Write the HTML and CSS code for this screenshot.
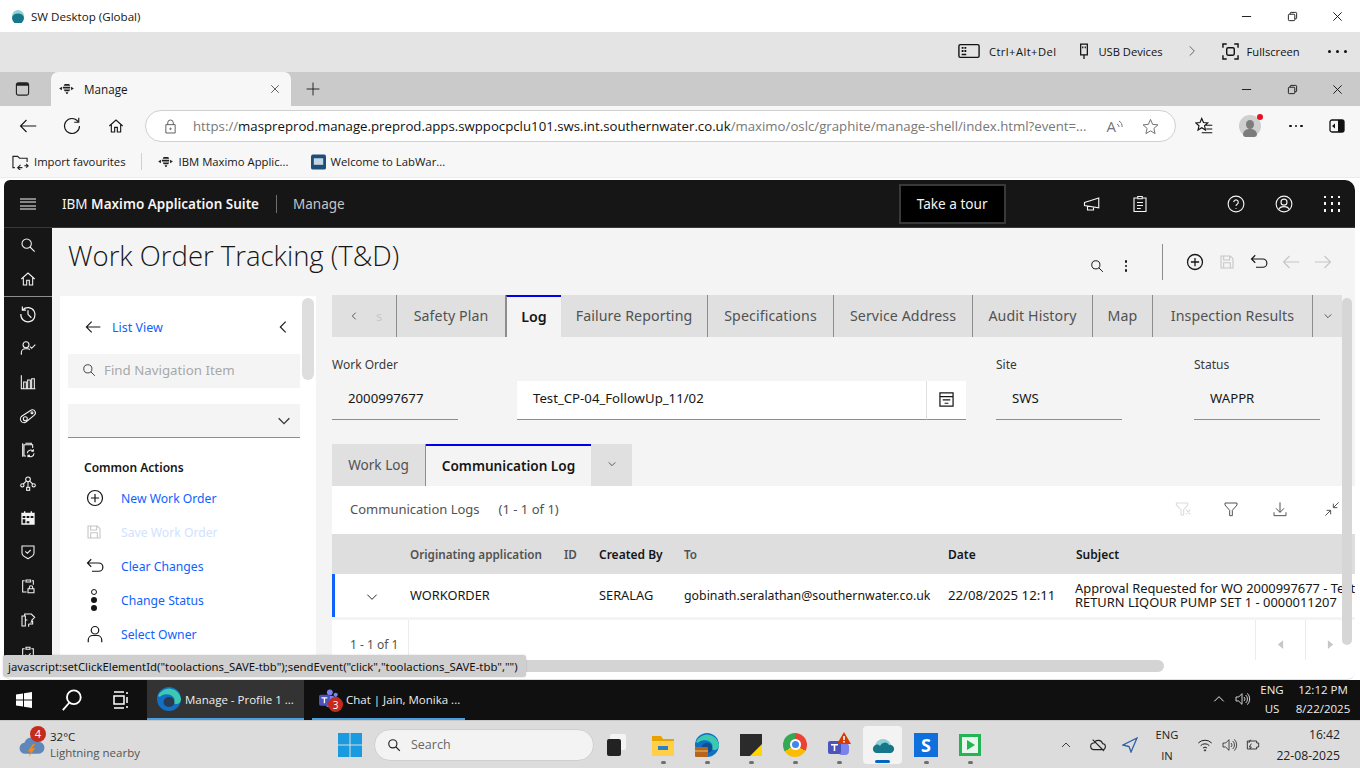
FILE: index.html
```html
<!DOCTYPE html>
<html lang="en">
<head>
<meta charset="utf-8">
<title>Manage</title>
<link rel="stylesheet" href="styles.css">
</head>
<body>
<svg class="defs" aria-hidden="true">
  <symbol id="search" viewBox="0 0 24 24"><circle cx="10" cy="10" r="7"/><path d="M15 15l7 7"/></symbol>
  <symbol id="home" viewBox="0 0 24 24"><path d="M2 12L12 3l10 9M5 10v11h5v-7h4v7h5V10"/></symbol>
  <symbol id="history" viewBox="0 0 24 24"><path d="M5 6.500A9.500 9.500 0 1 1 2.500 12M4.500 2v4.800h4.800M12 7v5.500l4.500 4.500"/></symbol>
  <symbol id="usercheck" viewBox="0 0 24 24"><circle cx="9" cy="7" r="4.500"/><path d="M2 22v-3a6 6 0 0 1 6-6h3a6 6 0 0 1 4 1.500M15 10l2.500 2.500L23 7"/></symbol>
  <symbol id="chart" viewBox="0 0 24 24"><path d="M2 2v20h21M5.500 22V12h4v10M11.500 22V9h4v13M17.500 22V7h4v15"/></symbol>
  <symbol id="belt" viewBox="0 0 24 24"><path d="M3 12l14-9a4.500 4.500 0 0 1 4 8L9 21a5 5 0 0 1-6-9z"/><circle cx="8" cy="16" r="3"/><circle cx="18" cy="7" r="1.500"/></symbol>
  <symbol id="clipcycle" viewBox="0 0 24 24"><path d="M8 2h9v2H6v17h3M4 2v20M17 4h2v5"/><path d="M11 17a5 5 0 0 1 9-3M21 17a5 5 0 0 1-9 3M20 11v3h-3M12 23v-3h3"/></symbol>
  <symbol id="tree" viewBox="0 0 24 24"><circle cx="12" cy="5" r="3.500"/><circle cx="3.500" cy="14" r="2.500"/><circle cx="20.500" cy="14" r="2.500"/><rect x="10" y="17" width="4.500" height="4.500"/><path d="M9 8l-4 4M15 8l4 4M12 9v8"/></symbol>
  <symbol id="calendar" viewBox="0 0 24 24"><path class="solid" d="M2 4h4V2h2v2h8V2h2v2h4v18H2zM4 9v3h4V9zm6 0v3h4V9zm6 0v3h4V9zM4 14v6h4v-6zm6 3v3h4v-3z"/></symbol>
  <symbol id="shield" viewBox="0 0 24 24"><path d="M3 3h18v11c0 4-5 6-9 8-4-2-9-4-9-8zM8 11l3 3 5-5"/></symbol>
  <symbol id="cliplock" viewBox="0 0 24 24"><path d="M9 3h7v3H9zM7 4H4v17h6M18 4h2v6M12 16h9v6h-9zM14 16v-2a2.500 2.500 0 0 1 5 0v2"/></symbol>
  <symbol id="cycle" viewBox="0 0 24 24"><path d="M3 6h5v15H3zM8 12h3M12 3h5l5 5-5 5M7 6V3h5M13 18h6v-5M19 13l-3 3M13 22v-4"/></symbol>
  <symbol id="clipcheck" viewBox="0 0 24 24"><path d="M9 2h6v3H9zM7 4H4v18h16V4h-3M8 13l3 3 5-5"/></symbol>
  <symbol id="plus" viewBox="0 0 24 24"><circle cx="12" cy="12" r="10"/><path d="M12 6.500v11M6.500 12h11"/></symbol>
  <symbol id="save" viewBox="0 0 24 24"><path d="M3 3h14l4 4v14H3zM7 3v6h9V3M7 21v-8h10v8"/></symbol>
  <symbol id="undo" viewBox="0 0 24 24"><path d="M2 8h15a5 5 0 0 1 0 11H8M7 3L2 8l5 5"/></symbol>
  <symbol id="arrowl" viewBox="0 0 24 24"><path d="M23 12H2M10 4l-8 8 8 8"/></symbol>
  <symbol id="arrowr" viewBox="0 0 24 24"><path d="M1 12h21M14 4l8 8-8 8"/></symbol>
  <symbol id="chevd" viewBox="0 0 24 24"><path d="M4 8l8 8 8-8"/></symbol>
  <symbol id="chevl" viewBox="0 0 24 24"><path d="M16 4l-8 8 8 8"/></symbol>
  <symbol id="chevr" viewBox="0 0 24 24"><path d="M8 4l8 8-8 8"/></symbol>
  <symbol id="chevu" viewBox="0 0 24 24"><path d="M4 16l8-8 8 8"/></symbol>
  <symbol id="close" viewBox="0 0 24 24"><path d="M3 3l18 18M21 3L3 21"/></symbol>
  <symbol id="minimise" viewBox="0 0 24 24"><path d="M2 12h20"/></symbol>
  <symbol id="restore" viewBox="0 0 24 24"><rect x="3" y="7" width="14" height="14" rx="2"/><path d="M7 7V5a2 2 0 0 1 2-2h10a2 2 0 0 1 2 2v10a2 2 0 0 1-2 2h-2"/></symbol>
  <symbol id="speaker" viewBox="0 0 24 24"><path d="M3 9h4l5-5v16l-5-5H3zM15 9a4 4 0 0 1 0 6M17.500 6a8 8 0 0 1 0 12M20 3.500a12 12 0 0 1 0 17"/></symbol>
  <symbol id="filter" viewBox="0 0 24 24"><path d="M3 3h18v3l-7 8v8h-4v-8L3 6z"/></symbol>
  <symbol id="download" viewBox="0 0 24 24"><path d="M12 2v15M6 11l6 6 6-6M3 17v5h18v-5"/></symbol>
  <symbol id="collapse" viewBox="0 0 24 24"><path d="M22 2l-8 8M14 4v6h6M2 22l8-8M4 14h6v6"/></symbol>
</svg>

<div class="page">
  <header class="titlebar">
    <div class="titlebar-left">
      <svg class="logo-sw" viewBox="0 0 14 14"><circle class="cloud-a" cx="7" cy="7" r="6"/><path class="cloud-b" d="M1 9a6 6 0 0 0 12 0 4 3 0 0 0-12 0z"/></svg>
      <span>SW Desktop (Global)</span>
    </div>
    <div class="winctl">
      <svg class="ic ic-11"><use href="#minimise"/></svg>
      <svg class="ic ic-11"><use href="#restore"/></svg>
      <svg class="ic ic-11"><use href="#close"/></svg>
    </div>
  </header>

  <div class="citrix">
    <div class="citrix-item ctrl">
      <svg class="cad" viewBox="0 0 24 16"><rect x="1" y="1" width="22" height="14" rx="1.500"/><path class="cad-keys" d="M4 3.500h2v2H4zM7 3.500h2v2H7zM4 7h2v2H4zM7 7h2v2H7zM4 11h5v1.500H4z"/></svg>
      <span class="ctrl-text">Ctrl+Alt+Del</span>
    </div>
    <div class="citrix-item usb">
      <svg class="usb-ic" viewBox="0 0 12 20"><path d="M2 1h8v13H2zM6 14v5M4.500 4v2M7.500 4v2"/></svg>
      <span>USB Devices</span>
    </div>
    <svg class="ic ic-14 citrix-chev"><use href="#chevr"/></svg>
    <div class="citrix-item full">
      <svg class="full-ic" viewBox="0 0 18 18"><path d="M1 5V1h4M13 1h4v4M17 13v4h-4M5 17H1v-4"/><rect x="5" y="5" width="8" height="8" rx="1.500"/></svg>
      <span>Fullscreen</span>
    </div>
    <div class="dots"><i></i><i></i><i></i></div>
  </div>

  <div class="tabstrip">
    <div class="tabside">
      <svg class="tabside-ic" viewBox="0 0 16 16"><rect x="1.500" y="1.500" width="13" height="13" rx="2"/><path class="fillbar" d="M1.500 3.500a2 2 0 0 1 2-2h9a2 2 0 0 1 2 2v1h-13z"/></svg>
    </div>
    <div class="browser-tab">
      <svg class="bee" viewBox="0 0 18 12"><path d="M7 1h5l1 2H6zM5 4h8v2H5zM6 7h7l-1 2H7zM8 10h3l-1 2H9zM1 6l3-2v4zM14 4l3 2-3 2z"/></svg>
      <span class="browser-tab-title">Manage</span>
      <svg class="ic ic-10"><use href="#close"/></svg>
    </div>
    <svg class="ic ic-14 newtab" viewBox="0 0 24 24"><path d="M12 1v22M1 12h22"/></svg>
    <div class="winctl winctl-edge">
      <svg class="ic ic-11"><use href="#minimise"/></svg>
      <svg class="ic ic-11"><use href="#restore"/></svg>
      <svg class="ic ic-11"><use href="#close"/></svg>
    </div>
  </div>

  <div class="addressbar">
    <svg class="ic ic-18 nav-back"><use href="#arrowl"/></svg>
    <svg class="ic ic-18 nav-reload" viewBox="0 0 24 24"><path d="M20 6a10 10 0 1 0 2 6M21 1v6h-6"/></svg>
    <svg class="ic ic-16 nav-home"><use href="#home"/></svg>
    <div class="omnibox">
      <svg class="lock" viewBox="0 0 14 16"><path d="M2 6h10v9H2zM4 6V4a3 3 0 0 1 6 0v2"/><circle cx="7" cy="10.500" r="0.800"/></svg>
      <span class="url"><span class="url-dim">https://</span>maspreprod.manage.preprod.apps.swppocpclu101.sws.int.southernwater.co.uk<span class="url-dim">/maximo/oslc/graphite/manage-shell/index.html?event=...</span></span>
      <span class="read-aloud">A<svg class="ra-waves" viewBox="0 0 8 12"><path d="M1 5a3 3 0 0 1 2 3M3 2a6 6 0 0 1 3 6"/></svg></span>
      <svg class="star" viewBox="0 0 24 24"><path d="M12 2l3 7 7.500.7-5.700 5 1.700 7.300-6.500-3.800L5.500 22l1.700-7.300-5.700-5L9 9z"/></svg>
    </div>
    <svg class="favlist" viewBox="0 0 24 24"><path d="M9 2l2.300 5.400 5.700.5-4.300 3.800 1.300 5.600-5-3-5 3 1.300-5.600L1 7.900l5.700-.5zM15 11h8M15 16h8M9 21h14"/></svg>
    <div class="avatar"><i class="avatar-head"></i><i class="avatar-body"></i><i class="avatar-dot"></i></div>
    <div class="dots dots-small"><i></i><i></i><i></i></div>
    <svg class="sidebar-ic" viewBox="0 0 16 16"><rect x="1" y="2" width="14" height="12" rx="2"/><path class="sidebar-fill" d="M9 2h4a2 2 0 0 1 2 2v8a2 2 0 0 1-2 2H9zM3 8l3-2.500v5z"/></svg>
  </div>

  <div class="favbar">
    <div class="fav">
      <svg class="fav-folder" viewBox="0 0 18 16"><path d="M3 14H1V2h5l2 2h8v4M11 14H6M9 11l-3 3 3 3M13 12h4l-2-2M17 12l-2 2"/></svg>
      <span>Import favourites</span>
    </div>
    <i class="fav-sep"></i>
    <div class="fav">
      <svg class="bee" viewBox="0 0 18 12"><path d="M7 1h5l1 2H6zM5 4h8v2H5zM6 7h7l-1 2H7zM8 10h3l-1 2H9zM1 6l3-2v4zM14 4l3 2-3 2z"/></svg>
      <span>IBM Maximo Applic...</span>
    </div>
    <div class="fav">
      <svg class="lab" viewBox="0 0 16 16"><rect width="16" height="16" rx="2"/><rect class="lab-in" x="3" y="4" width="10" height="7"/></svg>
      <span>Welcome to LabWar...</span>
    </div>
  </div>

  <div class="app">
    <div class="app-header">
      <svg class="hamburger" viewBox="0 0 16 12"><path d="M0 1h16M0 4h16M0 8h16M0 11h16"/></svg>
      <div class="brand">IBM <b>Maximo Application Suite</b></div>
      <i class="brand-sep"></i>
      <div class="brand-app">Manage</div>
      <div class="tour">Take a tour</div>
      <svg class="ic ic-18 hd-a" viewBox="0 0 24 24"><path d="M2 10l19-6v13L2 14zM6 15v5h8v-3"/></svg>
      <svg class="ic ic-18 hd-b" viewBox="0 0 24 24"><path d="M9 2h6v3H9zM8 4H4v18h16V4h-4M8 10h8M8 14h8M8 18h5"/></svg>
      <svg class="ic ic-18 hd-c" viewBox="0 0 24 24"><circle cx="12" cy="12" r="10.500"/><path d="M9 9.500a3 3 0 1 1 4.500 2.700c-1 .6-1.500 1.300-1.500 2.300M12 17.500v1"/></svg>
      <svg class="ic ic-18 hd-d" viewBox="0 0 24 24"><circle cx="12" cy="12" r="10.500"/><circle cx="12" cy="9.500" r="4"/><path d="M5 19.500c1-3 3.500-4 7-4s6 1 7 4"/></svg>
      <div class="waffle"><i></i><i></i><i></i><i></i><i></i><i></i><i></i><i></i><i></i></div>
    </div>

    <div class="app-body">
      <nav class="sidenav">
        <div class="sn-group">
          <div class="sn"><svg class="ic ic-16"><use href="#search"/></svg></div>
          <div class="sn"><svg class="ic ic-16"><use href="#home"/></svg></div>
        </div>
        <div class="sn"><svg class="ic ic-18"><use href="#history"/></svg></div>
        <div class="sn"><svg class="ic ic-16"><use href="#usercheck"/></svg></div>
        <div class="sn"><svg class="ic ic-16"><use href="#chart"/></svg></div>
        <div class="sn"><svg class="ic ic-16"><use href="#belt"/></svg></div>
        <div class="sn"><svg class="ic ic-16"><use href="#clipcycle"/></svg></div>
        <div class="sn"><svg class="ic ic-16"><use href="#tree"/></svg></div>
        <div class="sn"><svg class="ic ic-16"><use href="#calendar"/></svg></div>
        <div class="sn"><svg class="ic ic-16"><use href="#shield"/></svg></div>
        <div class="sn"><svg class="ic ic-16"><use href="#cliplock"/></svg></div>
        <div class="sn"><svg class="ic ic-16"><use href="#cycle"/></svg></div>
        <div class="sn"><svg class="ic ic-16"><use href="#clipcheck"/></svg></div>
      </nav>

      <main class="main">
        <div class="pagehead">
          <h1 class="pagetitle">Work Order Tracking (T&amp;D)</h1>
          <div class="pagetools">
            <svg class="ic ic-14 pt-search"><use href="#search"/></svg>
            <div class="kebab"><i></i><i></i><i></i></div>
            <i class="pt-sep"></i>
            <svg class="ic ic-18 pt-plus"><use href="#plus"/></svg>
            <svg class="ic ic-16 muted pt-save"><use href="#save"/></svg>
            <svg class="ic ic-18 pt-undo"><use href="#undo"/></svg>
            <svg class="ic ic-18 muted pt-left"><use href="#arrowl"/></svg>
            <svg class="ic ic-18 muted pt-right"><use href="#arrowr"/></svg>
          </div>
        </div>

        <div class="workspace">
          <aside class="leftpanel">
            <div class="listview">
              <svg class="ic ic-16"><use href="#arrowl"/></svg>
              <a class="link lv-link">List View</a>
              <svg class="ic ic-16 lv-chev"><use href="#chevl"/></svg>
            </div>
            <div class="findnav">
              <svg class="ic ic-14 fn-ic"><use href="#search"/></svg>
              <span>Find Navigation Item</span>
            </div>
            <div class="dropdown"><svg class="ic ic-16"><use href="#chevd"/></svg></div>
            <h2 class="actions-title">Common Actions</h2>
            <ul class="actions">
              <li><span class="act-ic"><svg class="ic ic-18"><use href="#plus"/></svg></span><a class="link">New Work Order</a></li>
              <li class="disabled"><span class="act-ic"><svg class="ic ic-16"><use href="#save"/></svg></span><a class="link">Save Work Order</a></li>
              <li><span class="act-ic"><svg class="ic ic-18"><use href="#undo"/></svg></span><a class="link">Clear Changes</a></li>
              <li><span class="act-ic"><span class="status-ic"><i class="s-open"></i><i></i><i></i></span></span><a class="link">Change Status</a></li>
              <li><span class="act-ic"><svg class="ic ic-18" viewBox="0 0 24 24"><circle cx="12" cy="7" r="5"/><path d="M3 23v-3a6 6 0 0 1 6-6h6a6 6 0 0 1 6 6v3"/></svg></span><a class="link">Select Owner</a></li>
            </ul>
            <i class="panel-scroll"></i>
          </aside>

          <section class="detail">
            <div class="tabs">
              <div class="tab tab-nav"><svg class="ic ic-10"><use href="#chevl"/></svg><span class="tab-ghost">s</span></div>
              <div class="tab">Safety Plan</div>
              <div class="tab active">Log</div>
              <div class="tab">Failure Reporting</div>
              <div class="tab">Specifications</div>
              <div class="tab">Service Address</div>
              <div class="tab">Audit History</div>
              <div class="tab">Map</div>
              <div class="tab">Inspection Results</div>
              <div class="tab tab-more"><svg class="ic ic-10"><use href="#chevd"/></svg></div>
            </div>

            <div class="form">
              <div class="field">
                <label class="flabel">Work Order</label>
                <div class="fvalue">2000997677</div>
              </div>
              <i></i>
              <div class="field field-desc">
                <div class="fvalue fvalue-white">Test_CP-04_FollowUp_11/02</div>
                <div class="fbtn"><svg class="longdesc" viewBox="0 0 16 16"><path d="M1 1h14v14H1zM1 5h14M4 8.500h8M6 12h4"/></svg></div>
              </div>
              <i></i>
              <div class="field">
                <label class="flabel">Site</label>
                <div class="fvalue">SWS</div>
              </div>
              <i></i>
              <div class="field">
                <label class="flabel">Status</label>
                <div class="fvalue">WAPPR</div>
              </div>
            </div>

            <div class="subtabs">
              <div class="subtab subtab-work">Work Log</div>
              <div class="subtab active">Communication Log</div>
              <div class="subtab subtab-more"><svg class="ic ic-10"><use href="#chevd"/></svg></div>
            </div>

            <div class="tablepanel">
              <div class="tabletools">
                <span class="tt-title">Communication Logs</span>
                <span class="tt-count">(1 - 1 of 1)</span>
                <svg class="ic ic-16 muted-soft tt-clear" viewBox="0 0 24 24"><path d="M2 3h17v3l-6 7v8h-4v-8L2 6zM17 13l6 7M23 13l-6 7"/></svg>
                <svg class="ic ic-16 tt-filter"><use href="#filter"/></svg>
                <svg class="ic ic-16 tt-dl"><use href="#download"/></svg>
                <svg class="ic ic-16 tt-col"><use href="#collapse"/></svg>
              </div>
              <div class="row thead">
                <span></span>
                <span class="th-soft">Originating application</span>
                <span class="th-soft">ID</span>
                <span>Created By</span>
                <span class="th-soft">To</span>
                <span>Date</span>
                <span>Subject</span>
              </div>
              <div class="row tbody">
                <span class="row-exp"><svg class="ic ic-14"><use href="#chevd"/></svg></span>
                <span>WORKORDER</span>
                <span></span>
                <span>SERALAG</span>
                <span class="cell-mail">gobinath.seralathan@southernwater.co.uk</span>
                <span class="cell-date">22/08/2025 12:11</span>
                <span class="subject">Approval Requested for WO 2000997677 - Test_<br>RETURN LIQOUR PUMP SET 1 - 0000011207</span>
              </div>
              <div class="tablefoot">
                <span class="tf-count">1 - 1 of 1</span>
                <i class="tf-spacer"></i>
                <span class="tf-btn"><svg class="caret" viewBox="0 0 8 10"><path d="M7 0v10L1 5z"/></svg></span>
                <span class="tf-btn"><svg class="caret" viewBox="0 0 8 10"><path d="M1 0v10l6-5z"/></svg></span>
              </div>
            </div>
            <i class="detail-scroll"></i>
          </section>
        </div>
      </main>
    </div>

    <div class="hscroll"><i></i></div>
    <div class="statuslink">javascript:setClickElementId("toolactions_SAVE-tbb");sendEvent("click","toolactions_SAVE-tbb","")</div>
  </div>

  <div class="remote-taskbar">
    <svg class="win10" viewBox="0 0 16 16"><path d="M0 2.500l7-1V7.500H0zM8 1.300L16 0v7.500H8zM0 8.500h7v6l-7-1zM8 8.500h8V16l-8-1.300z"/></svg>
    <svg class="rt-search" viewBox="0 0 24 24"><circle cx="14" cy="9" r="7.500"/><path d="M9 15l-7 8"/></svg>
    <svg class="rt-view" viewBox="0 0 18 18"><path d="M3 1h10M3 17h10M3 5h10v8H3zM16 1v2M16 6v6M16 15v2"/></svg>
    <div class="rt-app rt-app-active">
      <svg class="edge-ic" viewBox="0 0 24 24"><circle class="e-blue" cx="12" cy="12" r="12"/><path class="e-green" d="M1 9a12 12 0 0 1 23 3c0 3-2 5-5 5-2 0-3-1-3-2 1-1 2-2 1-4-2-4-9-5-13-2-1 1-2 1-3 0z"/><ellipse class="e-hole-dark" cx="12" cy="15" rx="5.500" ry="5"/></svg>
      <span>Manage - Profile 1 ...</span>
    </div>
    <div class="rt-app rt-app-chat">
      <span class="teams-mini"><svg class="teams-people" viewBox="0 0 24 24"><circle class="t1" cx="13" cy="4" r="3.500"/><circle class="t1" cx="20" cy="7" r="2.500"/><rect class="t1" x="15" y="10" width="9" height="11" rx="4"/><rect class="t1" x="8" y="8" width="11" height="14" rx="4"/><rect class="t2" x="0" y="7" width="13" height="13" rx="2"/><path class="t3" d="M3 10h7v1.500H7.300V17H5.700v-5.500H3z"/></svg><b class="teams-badge">3</b></span>
      <span>Chat | Jain, Monika ...</span>
    </div>
    <div class="rt-tray">
      <svg class="ic ic-14 rt-up"><use href="#chevu"/></svg>
      <svg class="ic ic-16 rt-sp"><use href="#speaker"/></svg>
      <div class="rt-lang">ENG<br>US</div>
      <div class="rt-clock">12:12 PM<br>8/22/2025</div>
    </div>
  </div>

  <footer class="local-taskbar">
    <div class="weather">
      <div class="weather-ic">
        <svg viewBox="0 0 24 24"><path class="w-cloud" d="M6 20a5 5 0 0 1-1-10 7 7 0 0 1 13-1 5.500 5.500 0 0 1 0 11z"/><path class="w-bolt" d="M13 11l-5 7h3l-2 5 6-8h-3l3-4z"/></svg>
        <b class="weather-badge">4</b>
      </div>
      <div class="weather-text"><span>32°C</span><span class="weather-sub">Lightning nearby</span></div>
    </div>
    <div class="lt-center">
      <svg class="win11" viewBox="0 0 24 24"><path d="M0 0h11.500v11.500H0zM12.500 0H24v11.500H12.500zM0 12.500h11.500V24H0zM12.500 12.500H24V24H12.500z"/></svg>
      <div class="lt-search">
        <svg class="ic ic-14"><use href="#search"/></svg>
        <span>Search</span>
      </div>
      <div class="lt-app lt-copilot"><i class="cp-white"></i><i class="cp-black"></i></div>
      <div class="lt-app lt-folder"><svg class="lt-ic" viewBox="0 0 24 24"><path class="y1" d="M1 3h9l2 3h11v17H1z"/><path class="y2" d="M1 8h22v15H1z"/><rect class="y3" x="7" y="13" width="10" height="4"/></svg><i class="pip"></i></div>
      <div class="lt-app"><svg class="lt-ic" viewBox="0 0 24 24"><circle class="e-blue" cx="12" cy="12" r="12"/><path class="e-green" d="M1 9a12 12 0 0 1 23 3c0 3-2 5-5 5-2 0-3-1-3-2 1-1 2-2 1-4-2-4-9-5-13-2-1 1-2 1-3 0z"/><ellipse class="e-hole" cx="12" cy="15" rx="5.500" ry="5"/><rect class="e-case" x="0" y="14" width="13" height="10" rx="1"/><path class="e-case-line" d="M0 18h13"/></svg><i class="pip"></i></div>
      <div class="lt-app"><svg class="lt-ic" viewBox="0 0 24 24"><rect class="note" x="1" y="1" width="22" height="22"/><path class="note-y" d="M23 11v12H11z"/></svg><i class="pip"></i></div>
      <div class="lt-app"><span class="chrome"><i></i></span><i class="pip"></i></div>
      <div class="lt-app"><svg class="lt-ic" viewBox="0 0 24 24"><circle class="t1" cx="16" cy="9" r="3.500"/><rect class="t1" x="11" y="10" width="11" height="12" rx="4"/><rect class="t2" x="1" y="8" width="13" height="13" rx="2"/><path class="t3" d="M4 11h7v1.500H8.300V18H6.700v-5.500H4z"/><path class="t4" d="M17-1l7 12H10z"/><path class="t5" d="M16.200 3h1.600v4h-1.600zM16.200 8h1.600v1.500h-1.600z"/></svg><i class="pip"></i></div>
      <div class="lt-app lt-active"><svg class="lt-ic" viewBox="0 0 24 24"><path class="cloud-a" d="M4 14a8 8 0 0 1 16 0z"/><path class="cloud-b" d="M2 15a4 4 0 0 1 7-2 5 5 0 0 1 9-1 4 4 0 0 1 2 8H6a4 4 0 0 1-4-5z"/></svg><i class="bar"></i></div>
      <div class="lt-app"><span class="sapp">S</span><i class="pip"></i></div>
      <div class="lt-app"><svg class="lt-ic" viewBox="0 0 24 24"><rect class="g1" x="1" y="1" width="22" height="22"/><rect class="g2" x="4" y="4" width="16" height="16"/><path class="g3" d="M9 7l8 5-8 5z"/></svg><i class="pip"></i></div>
    </div>
    <div class="lt-tray">
      <svg class="ic ic-12 tr-up"><use href="#chevu"/></svg>
      <svg class="ic ic-16 tr-cloud" viewBox="0 0 24 24"><path d="M6 19a5 5 0 0 1 0-10 7 7 0 0 1 13 1 4.500 4.500 0 0 1-1 9zM4 4l17 17"/></svg>
      <svg class="tr-nav" viewBox="0 0 16 16"><path d="M15 1L1 8l6 1.500L9 15z"/></svg>
      <div class="tr-lang">ENG<br>IN</div>
      <svg class="ic ic-16 tr-wifi" viewBox="0 0 24 24"><path d="M2 9a14 14 0 0 1 20 0M5.500 13a9 9 0 0 1 13 0M9 16.500a4.500 4.500 0 0 1 6 0"/><circle cx="12" cy="20" r="1"/></svg>
      <svg class="ic ic-16 tr-sp"><use href="#speaker"/></svg>
      <svg class="ic ic-16 tr-bat" viewBox="0 0 24 24"><path d="M5 6h14v3h3v6h-3v3H5zM7 9l3-5M11 10l-3 5h3l-2 3"/></svg>
      <div class="tr-clock">16:42<br>22-08-2025</div>
    </div>
  </footer>
</div>
</body>
</html>
```
FILE: styles.css
```css
* { box-sizing: border-box; }
html, body { margin: 0; padding: 0; }
body { width: 1360px; height: 768px; overflow: hidden; background: #fff; font-family: "Open Sans", "Noto Sans", sans-serif; color: #161616; }
.defs { display: none; }
i { display: block; font-style: normal; }
h1, h2, ul { margin: 0; padding: 0; font-weight: normal; }
ul { list-style: none; }

.page { display: flex; flex-direction: column; width: 1360px; height: 768px; overflow: hidden; }

.ic { fill: none; stroke: currentColor; stroke-width: 1.6; display: block; flex: none; overflow: visible; }
symbol { overflow: visible; }
.solid { fill: currentColor; stroke: none; }
.ic-10 { width: 10px; height: 10px; }
.ic-11 { width: 11px; height: 11px; }
.ic-12 { width: 12px; height: 12px; }
.ic-14 { width: 14px; height: 14px; }
.ic-16 { width: 16px; height: 16px; }
.ic-18 { width: 18px; height: 18px; }
.muted { color: #c6c6c6; }
.muted-soft { color: #dcdcdc; }

/* Citrix window title */
.titlebar { height: 32px; flex: none; display: flex; align-items: center; padding-left: 11px; font-size: 11.6px; }
.titlebar-left { display: flex; align-items: center; gap: 6px; }
.logo-sw { width: 14px; height: 14px; }
.cloud-a { fill: #8fd0d6; }
.cloud-b { fill: #17778a; }
.winctl { margin-left: auto; display: flex; width: 119px; justify-content: space-between; padding-right: 17px; color: #111; }
.winctl .ic { stroke-width: 2; }

/* Citrix toolbar */
.citrix { height: 40px; flex: none; background: #e4e4e4; display: flex; align-items: center; font-size: 11.2px; color: #111; padding-left: 958px; padding-bottom: 2px; }
.citrix-item { display: flex; align-items: center; }
.ctrl-text { letter-spacing: 0.42px; }
.cad { width: 22px; height: 16px; fill: none; stroke: #111; stroke-width: 1.500; margin-right: 9px; }
.cad-keys { fill: #111; stroke: none; }
.usb { margin-left: 23px; }
.usb-ic { width: 10px; height: 19px; fill: none; stroke: #111; stroke-width: 1.500; margin-right: 9px; }
.citrix-chev { margin-left: 22px; color: #555; stroke-width: 1.500; }
.full { margin-left: 23px; }
.full-ic { width: 17px; height: 17px; fill: none; stroke: #111; stroke-width: 1.500; margin-right: 8px; }
.dots { display: flex; gap: 5px; margin-left: 28px; }
.dots i { width: 3px; height: 3px; border-radius: 50%; background: #111; }
.dots-small { gap: 3px; margin-left: 0; }
.dots-small i { width: 2.500px; height: 2.500px; }

/* Edge tabs */
.tabstrip { height: 34px; flex: none; background: #cacaca; display: flex; align-items: center; position: relative; }
.tabside { width: 51px; display: flex; justify-content: center; padding-right: 6px; }
.tabside-ic { width: 15px; height: 16px; fill: none; stroke: #222; stroke-width: 1.200; }
.fillbar { fill: #222; stroke: none; }
.browser-tab { width: 240px; height: 34px; background: #f7f7f7; border-radius: 7px 7px 0 0; display: flex; align-items: center; padding-left: 7px; padding-right: 11px; font-size: 11.7px; padding-bottom: 1px; }
.browser-tab-title { margin-left: 9px; flex: 1; }
.bee { width: 17px; height: 11px; fill: #1f1f1f; flex: none; }
.newtab { margin-left: 15px; stroke-width: 1.500; }
.winctl-edge { margin-left: auto; }

/* Address bar */
.addressbar { height: 40px; flex: none; background: #f7f7f7; display: flex; align-items: center; padding-left: 19px; }
.nav-back { stroke-width: 1.500; }
.nav-reload { margin-left: 26px; stroke-width: 1.500; }
.nav-home { margin-left: 27px; stroke-width: 1.700; }
.omnibox { margin-left: 21px; width: 1031px; height: 32px; border: 1px solid #d0d0d0; border-radius: 16px; background: #fff; display: flex; align-items: center; padding-left: 18px; flex: none; }
.lock { width: 13px; height: 15px; fill: none; stroke: #555; stroke-width: 1; flex: none; }
.url { margin-left: 16px; font-size: 13.22px; white-space: nowrap; color: #111; flex: none; }
.url-dim { color: #777; }
.read-aloud { margin-left: 20px; font-size: 15px; color: #777; display: flex; line-height: 1; }
.ra-waves { width: 8px; height: 12px; fill: none; stroke: #777; stroke-width: 1; }
.star { margin-left: 18px; width: 17px; height: 17px; fill: none; stroke: #666; stroke-width: 1.300; }
.favlist { margin-left: 19px; width: 18px; height: 18px; fill: none; stroke: #111; stroke-width: 1.500; }
.avatar { margin-left: 26px; width: 22px; height: 22px; border-radius: 50%; background: #cfcfcf; position: relative; overflow: visible; }
.avatar-head { position: absolute; left: 7px; top: 5px; width: 8px; height: 9px; border-radius: 50%; background: #7c7c7c; }
.avatar-body { position: absolute; left: 4px; top: 14px; width: 14px; height: 8px; border-radius: 7px 7px 3px 3px; background: #7c7c7c; }
.avatar-dot { position: absolute; right: -2px; top: -1px; width: 6px; height: 6px; border-radius: 50%; background: #e81123; }
.addressbar .dots-small { margin-left: 28px; }
.sidebar-ic { margin-left: 26px; width: 16px; height: 16px; fill: none; stroke: #111; stroke-width: 1.300; }
.sidebar-fill { fill: #111; stroke: none; }

/* Favourites */
.favbar { height: 32px; flex: none; background: #f7f7f7; display: flex; align-items: center; padding-left: 12px; font-size: 11.3px; border-bottom: 1px solid #ececec; }
.fav { display: flex; align-items: center; gap: 5px; }
.fav-folder { width: 17px; height: 16px; fill: none; stroke: #222; stroke-width: 1.200; }
.fav-sep { width: 1px; height: 17px; background: #d0d0d0; margin: 0 15px; }
.favbar .fav:nth-of-type(3) { margin-left: 22px; }
.lab { width: 15px; height: 16px; fill: #1f4e79; }
.lab-in { fill: #c5d5e5; }

/* App */
.app { height: 500px; flex: none; margin-top: 2px; width: 1351px; margin-left: 4px; position: relative; display: flex; flex-direction: column; font-family: "Noto Sans", sans-serif; border-radius: 5px 8px 8px 8px; overflow: visible; }
.app-header { height: 48px; flex: none; background: #161616; color: #f4f4f4; border-radius: 6px 10px 0 0; border-bottom: 1px solid #393939; display: flex; align-items: center; padding-left: 16px; font-size: 13.5px; }
.hamburger { width: 16px; height: 12px; stroke: #f4f4f4; stroke-width: 1.200; flex: none; }
.brand { margin-left: 26px; white-space: nowrap; }
.brand b { font-weight: 600; }
.brand-sep { width: 1px; height: 18px; background: #6f6f6f; margin-left: 17px; }
.brand-app { margin-left: 16px; color: #c6c6c6; }
.tour { margin-left: 554px; width: 107px; height: 40px; background: #000; border: 2px solid #393939; display: flex; align-items: center; justify-content: center; font-size: 13.6px; flex: none; }
.hd-a { margin-left: 77px; stroke-width: 1.500; }
.hd-b { margin-left: 30px; stroke-width: 1.500; }
.hd-c { margin-left: 78px; stroke-width: 1.500; }
.hd-d { margin-left: 30px; stroke-width: 1.500; }
.waffle { margin-left: 31px; width: 16px; height: 16px; display: grid; grid-template-columns: repeat(3, 2px); justify-content: space-between; align-content: space-between; flex: none; }
.waffle i { width: 2.500px; height: 2.500px; background: #f4f4f4; }

.app-body { height: 432px; flex: none; display: flex; background: #f4f4f4; overflow: hidden; }
.sidenav { width: 48px; flex: none; background: #161616; color: #f4f4f4; }
.sn-group { border-bottom: 1px solid #8d8d8d; height: 69px; }
.sn { height: 34px; display: flex; align-items: center; justify-content: center; }

.main { flex: 1; min-width: 0; display: flex; flex-direction: column; }
.pagehead { height: 68px; flex: none; display: flex; padding-left: 16px; }
.pagetitle { font-family: "Open Sans", sans-serif; font-weight: 300; font-size: 27.5px; line-height: 1; margin-top: 14px; white-space: nowrap; }
.pagetools { margin-left: auto; display: flex; align-items: center; height: 36px; margin-top: 16px; padding-right: 23px; }
.pt-search { margin-top: 8px; stroke-width: 1.700; }
.kebab { margin-left: 21px; margin-top: 8px; display: flex; flex-direction: column; gap: 2px; }
.kebab i { width: 2.500px; height: 2.500px; border-radius: 50%; background: #161616; }
.pt-sep { width: 1px; height: 36px; background: #8d8d8d; margin-left: 35px; }
.pt-plus { margin-left: 23px; stroke-width: 1.700; }
.pt-save { margin-left: 15px; }
.pt-undo { margin-left: 15px; stroke-width: 1.500; }
.pt-left { margin-left: 14px; stroke-width: 1.500; }
.pt-right { margin-left: 14px; stroke-width: 1.500; }

.workspace { flex: 1; display: flex; padding-left: 8px; min-height: 0; }
.leftpanel { width: 256px; flex: none; background: #fff; padding-left: 8px; position: relative; overflow: hidden; }
.listview { height: 58px; display: flex; align-items: center; padding-left: 17px; padding-top: 4px; }
.link { color: #0f62fe; font-size: 12.2px; white-space: nowrap; }
.lv-link { margin-left: 11px; font-size: 12.5px; }
.lv-chev { margin-left: 112px; stroke-width: 1.700; }
.findnav { width: 232px; height: 34px; background: #f4f4f4; display: flex; align-items: center; padding: 0 0 2px 14px; font-size: 13.3px; color: #a8a8a8; gap: 8px; }
.fn-ic { color: #393939; stroke-width: 1.600; }
.dropdown { width: 232px; height: 34px; margin-top: 16px; background: #f4f4f4; border-bottom: 1px solid #8d8d8d; display: flex; align-items: center; justify-content: flex-end; padding-right: 8px; color: #393939; }
.dropdown .ic { stroke-width: 2; }
.actions-title { font-size: 12px; font-weight: 600; margin: 21px 0 0 16px; line-height: 18px; }
.actions { margin-top: 4px; }
.actions li { height: 34px; display: flex; align-items: center; padding-left: 16px; }
.act-ic { width: 37px; display: flex; justify-content: flex-start; padding-left: 2px; }
.disabled .act-ic { color: #c6c6c6; }
.disabled .link { color: #d0e2ff; }
.status-ic { display: flex; flex-direction: column; gap: 2px; margin-left: 5px; }
.status-ic i { width: 6px; height: 6px; border-radius: 50%; background: #161616; }
.status-ic .s-open { background: #fff; border: 1px solid #161616; }
.panel-scroll { position: absolute; right: 2px; top: 2px; width: 12px; height: 82px; border-radius: 6px; background: #dedede; }

.detail { flex: 1; min-width: 0; margin-left: 16px; margin-top: -1px; position: relative; overflow: hidden; }
.tabs { height: 42px; margin-right: 13px; background: #e0e0e0; display: grid; grid-template-columns: 65px 109px 55px 147px 126px 139px 120px 60px 160px 1fr; font-size: 14.2px; color: #525252; }
.tab { display: flex; align-items: center; justify-content: center; border-right: 1px solid #8d8d8d; white-space: nowrap; letter-spacing: 0.1px; padding-bottom: 1px; }
.tab.active { background: #f4f4f4; border-top: 2px solid #0000e6; border-right: 0; border-left: 1px solid #8d8d8d; color: #161616; font-weight: 600; }
.tab-nav { justify-content: flex-start; padding-left: 17px; color: #161616; gap: 17px; }
.tab-ghost { color: #c8c8c8; font-size: 13px; }
.tab-more { border-right: 0; color: #161616; }

.form { height: 107px; display: grid; grid-template-columns: 126px 59px 449px 30px 126px 72px 126px; align-items: end; padding-bottom: 24px; }
.flabel { display: block; font-size: 12px; color: #393939; line-height: 16px; margin-bottom: 8px; }
.fvalue { height: 39px; border-bottom: 1px solid #8d8d8d; display: flex; align-items: center; padding-left: 16px; font-size: 13.2px; color: #161616; padding-bottom: 4px; }
.field-desc { display: flex; }
.fvalue-white { flex: 1; background: #fff; }
.fbtn { width: 40px; height: 39px; background: #fff; border-bottom: 1px solid #8d8d8d; border-left: 1px solid #e0e0e0; display: flex; align-items: center; justify-content: center; flex: none; padding-bottom: 2px; }
.longdesc { width: 15px; height: 15px; fill: none; stroke: #161616; stroke-width: 1.300; }

.subtabs { height: 42px; display: flex; font-size: 13.6px; }
.subtab { display: flex; align-items: center; justify-content: center; background: #e0e0e0; color: #525252; padding-bottom: 2px; }
.subtab-work { width: 94px; border-right: 1px solid #8d8d8d; }
.subtab.active { width: 165px; background: #f4f4f4; border-top: 2px solid #0000e6; color: #161616; font-weight: 600; }
.subtab-more { width: 41px; color: #161616; }

.tablepanel { background: #fff; height: 174px; }
.tabletools { height: 48px; display: flex; align-items: center; padding: 0 0 2px 18px; font-size: 13px; color: #525252; }
.tt-count { margin-left: 19px; }
.tt-clear { margin-left: auto; }
.tt-filter { margin-left: 32px; stroke-width: 1.500; }
.tt-dl { margin-left: 33px; stroke-width: 1.500; }
.tt-col { margin-left: 36px; margin-right: 15px; stroke-width: 1.500; }
.row { display: grid; grid-template-columns: 78px 154px 35px 85px 264px 128px 1fr; align-items: center; white-space: nowrap; }
.thead { height: 40px; background: #dedede; font-size: 12px; font-weight: 600; color: #161616; }
.th-soft { color: #525252; font-size: 11.7px; }
.tbody { height: 43px; grid-template-columns: 75px 154px 35px 85px 264px 128px 1fr; border-left: 3px solid #0f62fe; font-size: 12.8px; color: #161616; margin-bottom: 3px; box-shadow: 0 3px 0 #f4f4f4; padding-bottom: 1px; }
.cell-mail { font-size: 12.35px; }
.cell-date { font-size: 13.2px; }
.row-exp { padding: 3px 0 0 30px; }
.subject { line-height: 14px; overflow: hidden; font-size: 12.9px; margin-left: -1px; }
.tablefoot { height: 40px; display: flex; align-items: stretch; padding-left: 18px; font-size: 12px; color: #525252; }
.tf-count { display: flex; align-items: center; width: 58px; padding-top: 8px; }
.tf-spacer { flex: 1; border-left: 1px solid #ececec; }
.tf-btn { width: 50px; border-left: 1px solid #ececec; display: flex; align-items: center; justify-content: center; padding-top: 8px; }
.caret { width: 7px; height: 9px; fill: #c6c6c6; }
.detail-scroll { position: absolute; right: 3px; top: 3px; width: 10px; height: 347px; border-radius: 5px; background: #d6d6d6; }

.hscroll { height: 20px; flex: none; background: #fff; border-radius: 0 0 8px 8px; border-bottom: 1px solid #e0e0e0; }
.hscroll i { width: 1160px; height: 12px; border-radius: 0 6px 6px 0; background: #d4d4d4; }
.statuslink { position: absolute; left: -1px; top: 475px; width: 523px; height: 22px; background: #cfcfcf; border-radius: 3px; display: flex; align-items: center; padding-left: 5px; font-family: "Noto Sans", sans-serif; font-size: 11.35px; color: #111; white-space: nowrap; box-shadow: 0 0 2px rgba(0,0,0,.2); }

/* Edge logo */
.e-blue { fill: #1170c4; }
.e-green { fill: #3cc9b0; }
.e-hole-dark { fill: #2a3a50; }
.e-hole { fill: #0e4f96; }
.e-case { fill: #b7651c; }
.e-case-line { stroke: #f0c060; stroke-width: 1; fill: none; }

/* Remote taskbar */
.remote-taskbar { height: 40px; flex: none; background: #101010; color: #eee; display: flex; align-items: center; padding-left: 16px; font-size: 11.5px; }
.win10 { width: 16px; height: 16px; fill: #fff; flex: none; }
.rt-search { margin-left: 29px; width: 22px; height: 22px; fill: none; stroke: #fff; stroke-width: 2; flex: none; }
.rt-view { margin-left: 28px; width: 18px; height: 18px; fill: none; stroke: #fff; stroke-width: 1.500; flex: none; }
.rt-app { height: 40px; display: flex; align-items: center; border-bottom: 2px solid #4a9fe0; white-space: nowrap; }
.rt-app-active { margin-left: 18px; width: 157px; background: #333; padding-left: 10px; gap: 4px; }
.edge-ic { width: 24px; height: 24px; flex: none; }
.rt-app-chat { margin-left: 8px; width: 153px; padding-left: 6px; gap: 6px; }
.teams-mini { position: relative; width: 22px; height: 20px; flex: none; }
.teams-people { width: 22px; height: 20px; display: block; }
.teams-badge { position: absolute; left: 10px; top: 8px; width: 15px; height: 15px; border-radius: 50%; background: #c42b1c; color: #fff; font-size: 10px; font-weight: 400; display: flex; align-items: center; justify-content: center; }
.rt-tray { margin-left: auto; display: flex; align-items: center; padding: 0 7px 2px 0; font-size: 11.5px; line-height: 19px; text-align: center; }
.rt-up { stroke-width: 1.700; }
.rt-sp { margin-left: 8px; stroke-width: 1.300; }
.rt-lang { margin-left: 7px; width: 30px; }
.rt-clock { margin-left: 6px; width: 60px; }

/* Local taskbar */
.local-taskbar { height: 48px; flex: none; background: #dcdcdc; border-top: 1px solid #c8c8c8; display: flex; align-items: center; font-size: 11.5px; position: relative; }
.weather { width: 338px; display: flex; align-items: center; padding-left: 19px; gap: 5px; flex: none; }
.weather-ic { position: relative; width: 26px; height: 26px; }
.weather-ic svg { width: 26px; height: 26px; display: block; }
.w-cloud { fill: #5f87b8; }
.w-bolt { fill: #f08a1c; }
.weather-badge { position: absolute; left: 11px; top: -6px; width: 16px; height: 16px; border-radius: 50%; background: #c42b1c; color: #fff; font-size: 11px; font-weight: 400; display: flex; align-items: center; justify-content: center; }
.weather-text { display: flex; flex-direction: column; line-height: 16px; color: #222; }
.weather-sub { color: #555; }
.lt-center { display: flex; align-items: center; }
.win11 { width: 24px; height: 24px; fill: #1a9be0; flex: none; }
.lt-search { margin-left: 12px; width: 220px; height: 32px; background: #f3f3f3; border-radius: 16px; border: 1px solid #cfcfcf; display: flex; align-items: center; padding-left: 12px; gap: 10px; font-size: 12.5px; color: #666; flex: none; }
.lt-search .ic { color: #222; stroke-width: 2; }
.lt-app { position: relative; width: 44px; height: 38px; display: flex; align-items: center; justify-content: center; flex: none; }
.lt-copilot { margin-left: 1px; }
.lt-folder { margin-left: 2px; }
.cp-white { position: absolute; left: 15px; top: 8px; width: 16px; height: 16px; background: #f4f4f4; border-radius: 2px; }
.cp-black { position: absolute; left: 12px; top: 13px; width: 14px; height: 17px; background: #222; border-radius: 2px; }
.lt-ic { width: 24px; height: 24px; display: block; overflow: visible; }
.y1 { fill: #e8a200; }
.y2 { fill: #ffcf48; }
.y3 { fill: #2d7fc9; }
.pip { position: absolute; bottom: 0; left: 20px; width: 5px; height: 3px; border-radius: 2px; background: #6e6e6e; }
.note { fill: #2b2b2b; }
.note-y { fill: #ffd400; }
.chrome { width: 24px; height: 24px; border-radius: 50%; background: conic-gradient(#ea4335 0 33%, #fbbc05 33% 66%, #34a853 66% 100%); display: flex; align-items: center; justify-content: center; }
.chrome i { width: 11px; height: 11px; border-radius: 50%; background: #4285f4; border: 2px solid #fff; }
.t1 { fill: #7b83eb; }
.t2 { fill: #4b53bc; }
.t3 { fill: #fff; }
.t4 { fill: #d83b01; }
.t5 { fill: #fff; }
.lt-active { background: #f3f3f3; border-radius: 4px; width: 39px; margin: 0 2px; }
.bar { position: absolute; bottom: 1px; left: 12px; width: 15px; height: 3px; border-radius: 2px; background: #0067c0; }
.sapp { width: 24px; height: 24px; background: #0f6fdc; color: #fff; font-size: 18px; font-weight: 700; display: flex; align-items: center; justify-content: center; line-height: 1; }
.g1 { fill: #22b455; }
.g2 { fill: #e8f6ec; }
.g3 { fill: #22b455; }
.lt-tray { margin-left: auto; display: flex; align-items: center; padding-right: 20px; color: #222; }
.tr-up { stroke-width: 1.700; }
.tr-cloud { margin-left: 18px; stroke-width: 1.700; }
.tr-nav { margin-left: 16px; width: 16px; height: 16px; fill: none; stroke: #2b5fa8; stroke-width: 1.300; }
.tr-lang { margin-left: 14px; width: 30px; text-align: center; line-height: 21px; font-size: 11.2px; }
.tr-wifi { margin-left: 15px; stroke-width: 1.500; }
.tr-sp { margin-left: 8px; stroke-width: 1.200; }
.tr-bat { margin-left: 7px; stroke-width: 1.300; }
.tr-clock { margin-left: 10px; width: 70px; text-align: right; line-height: 21px; font-size: 12.2px; }
```
